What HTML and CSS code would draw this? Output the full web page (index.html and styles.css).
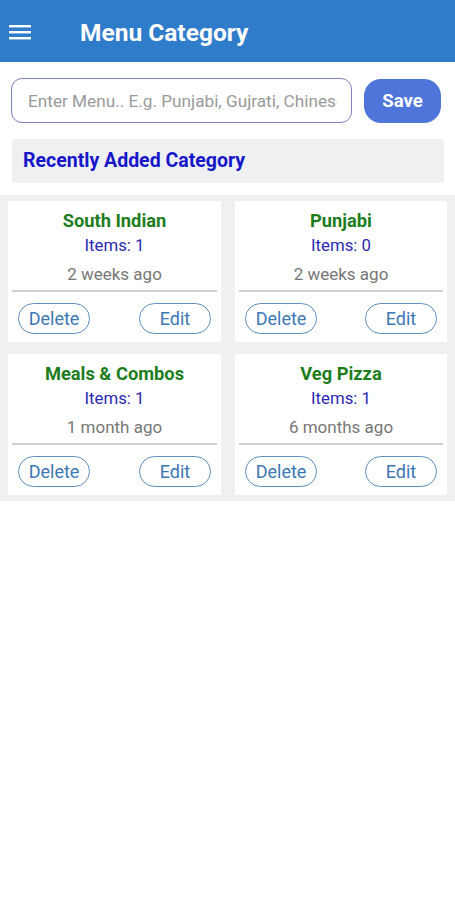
FILE: index.html
```html
<!DOCTYPE html>
<html lang="en">
  <head>
    <meta charset="UTF-8" />
    <meta name="viewport" content="width=device-width, initial-scale=1.0" />
    <title>Menu Category</title>
    <link rel="stylesheet" href="styles.css">
  </head>
  <body>
    <div class="topbar">
      <svg class="menu-icon" width="22" height="16" viewBox="0 0 22 16">
        <rect x="0" y="1" width="22" height="2.4" fill="#fff" />
        <rect x="0" y="7" width="22" height="2.4" fill="#fff" />
        <rect x="0" y="13" width="22" height="2.4" fill="#fff" />
      </svg>
      <h1>Menu Category</h1>
    </div>

    <form class="add-form">
      <input type="text" class="menu-input" placeholder="Enter Menu.. E.g. Punjabi, Gujrati, Chinese" />
      <button type="button" class="save-btn">Save</button>
    </form>

    <div class="recent">Recently Added Category</div>

    <div class="grid">
      <div class="card">
        <div class="card-title">South Indian</div>
        <div class="card-items">Items: 1</div>
        <div class="card-time">2 weeks ago</div>
        <div class="card-line"></div>
        <div class="card-actions">
          <button class="pill">Delete</button>
          <button class="pill">Edit</button>
        </div>
      </div>
      <div class="card">
        <div class="card-title">Punjabi</div>
        <div class="card-items">Items: 0</div>
        <div class="card-time">2 weeks ago</div>
        <div class="card-line"></div>
        <div class="card-actions">
          <button class="pill">Delete</button>
          <button class="pill">Edit</button>
        </div>
      </div>
      <div class="card">
        <div class="card-title">Meals &amp; Combos</div>
        <div class="card-items">Items: 1</div>
        <div class="card-time">1 month ago</div>
        <div class="card-line"></div>
        <div class="card-actions">
          <button class="pill">Delete</button>
          <button class="pill">Edit</button>
        </div>
      </div>
      <div class="card">
        <div class="card-title">Veg Pizza</div>
        <div class="card-items">Items: 1</div>
        <div class="card-time">6 months ago</div>
        <div class="card-line"></div>
        <div class="card-actions">
          <button class="pill">Delete</button>
          <button class="pill">Edit</button>
        </div>
      </div>
    </div>
  </body>
</html>
```

FILE: styles.css
```css
body {
  margin: 0;
  background: #fff;
  font-family: Roboto, "Liberation Sans", sans-serif;
}
.topbar {
  height: 62px;
  background-color: #2f7ccb;
  display: flex;
  align-items: center;
  padding-left: 9px;
}
.menu-icon {
  margin-top: 2px;
}
.topbar h1 {
  margin: 3px 0 0 49px;
  color: #fff;
  font-size: 24.5px;
  font-weight: bold;
}
.add-form {
  display: flex;
  align-items: center;
  padding: 16px 14px 0 11px;
}
.menu-input {
  width: 341px;
  height: 45px;
  box-sizing: border-box;
  border: 1.5px solid #7d82b8;
  border-radius: 11px;
  padding: 0 14px 0 16px;
  font-family: Roboto, "Liberation Sans", sans-serif;
  font-size: 17.2px;
  color: #333;
  outline: none;
}
.menu-input::placeholder {
  color: #9a9a9a;
}
.save-btn {
  margin-left: 12px;
  width: 77px;
  height: 44px;
  border: none;
  border-radius: 17px;
  background-color: #4f74da;
  color: #fff;
  font-family: Roboto, "Liberation Sans", sans-serif;
  font-size: 18.5px;
  font-weight: bold;
}
.recent {
  margin: 16px 11px 0 12px;
  height: 44px;
  line-height: 44px;
  background-color: #eef0f1;
  padding-left: 11px;
  color: #1717c9;
  font-size: 19.5px;
  font-weight: bold;
  border-radius: 2px;
}
.grid {
  margin-top: 12px;
  background-color: #eef0f2;
  padding: 6px 8px 6px 8px;
  display: grid;
  grid-template-columns: 213px 212px;
  column-gap: 14px;
  row-gap: 12px;
}
.card {
  background: #fff;
  padding: 8px 4px 8px 4px;
  text-align: center;
}
.card-title {
  line-height: 24px;
  color: #1d7d1d;
  font-size: 18.3px;
  font-weight: bold;
}
.card-items {
  line-height: 24px;
  color: #2b2bb0;
  font-size: 16.8px;
}
.card-time {
  margin-top: 5px;
  line-height: 24px;
  color: #777;
  font-size: 17px;
}
.card-line {
  margin-top: 4px;
  height: 2px;
  background: #cfd2d4;
}
.card-actions {
  margin-top: 11px;
  display: flex;
  justify-content: space-between;
  padding: 0 6px;
}
.pill {
  width: 72px;
  height: 31px;
  border: 1px solid #5f8fbd;
  border-radius: 16px;
  background: #fff;
  color: #3b78b4;
  font-family: Roboto, "Liberation Sans", sans-serif;
  font-size: 18px;
  padding: 0;
}
```
